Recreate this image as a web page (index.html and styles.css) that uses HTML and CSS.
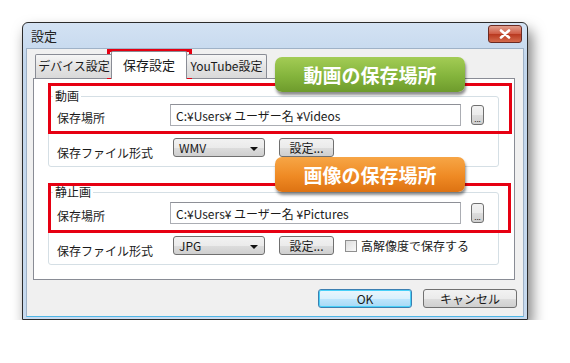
FILE: index.html
```html
<!DOCTYPE html>
<html lang="ja">
<head>
  <meta charset="UTF-8" />
  <title>設定</title>
  <link rel="stylesheet" href="styles.css">
</head>
<body>
  <div class="window">
    <div class="titlebar">
      <span class="title">設定</span>
      <button class="close-btn">
        <svg width="14" height="10" viewBox="0 0 14 10"><path d="M3 1.5 L11 8.5 M11 1.5 L3 8.5" stroke="#fff" stroke-width="2.6" stroke-linecap="round"/></svg>
      </button>
    </div>
    <div class="client">
      <div class="tabs">
        <div class="tab tab-device">デバイス設定</div>
        <div class="tab tab-save active">保存設定</div>
        <div class="tab tab-youtube">YouTube設定</div>
      </div>
      <div class="tab-panel">
        <fieldset class="group group-video">
          <legend>動画</legend>
          <div class="row row-path">
            <span class="label">保存場所</span>
            <input type="text" class="path" value="C:¥Users¥ ユーザー名 ¥Videos" />
            <button class="browse">...</button>
          </div>
          <div class="row row-format">
            <span class="label">保存ファイル形式</span>
            <div class="select"><span>WMV</span><i class="arrow"></i></div>
            <button class="btn-small">設定...</button>
          </div>
        </fieldset>
        <fieldset class="group group-image">
          <legend>静止画</legend>
          <div class="row row-path">
            <span class="label">保存場所</span>
            <input type="text" class="path" value="C:¥Users¥ ユーザー名 ¥Pictures" />
            <button class="browse">...</button>
          </div>
          <div class="row row-format">
            <span class="label">保存ファイル形式</span>
            <div class="select"><span>JPG</span><i class="arrow"></i></div>
            <button class="btn-small">設定...</button>
            <label class="check"><span class="box"></span>高解像度で保存する</label>
          </div>
        </fieldset>
      </div>
      <div class="dialog-buttons">
        <button class="btn btn-ok">OK</button>
        <button class="btn">キャンセル</button>
      </div>
    </div>
  </div>

  <div class="mark mark-tab"></div>
  <div class="mark mark-video"></div>
  <div class="mark mark-image"></div>
  <div class="callout callout-green">動画の保存場所</div>
  <div class="callout callout-orange">画像の保存場所</div>
</body>
</html>
```

FILE: styles.css
```css
body {
  margin: 0;
  background: #fff;
  font-family: "Noto Sans CJK JP", "Noto Sans", sans-serif;
  font-size: 12px;
  color: #1a1a1a;
}
button, input {
  font-family: inherit;
  font-size: 12px;
  color: #1a1a1a;
}

/* window frame */
.window {
  margin: 22px 0 0 22px;
  width: 498px;
  border: 1px solid #2b2b2b;
  border-radius: 6px 6px 0 0;
  padding: 0 3px 2px;
  background: linear-gradient(#d3e2f3, #c2d6ec 40px, #c7daef);
  box-shadow: 4px 8px 14px rgba(0, 0, 0, 0.5);
}
.titlebar {
  height: 25px;
  display: flex;
  align-items: center;
  justify-content: space-between;
}
.title {
  margin-left: 5px;
  font-size: 13px;
  color: #222;
}
.close-btn {
  width: 34px;
  height: 18px;
  margin-top: -3px;
  margin-right: 2px;
  padding: 0;
  border: 1px solid #6b2a22;
  border-radius: 3px;
  background: linear-gradient(#e2a08f, #cf5a43 50%, #b8381f 51%, #d46a4c);
  display: flex;
  align-items: center;
  justify-content: center;
}

.client {
  background: #f0f0f0;
  border: 1px solid #9fb2c7;
  border-bottom-color: #4fb6e6;
  padding: 0 8px 8px 6px;
}

/* tabs */
.tabs {
  display: flex;
  align-items: flex-end;
  height: 29px;
  padding-left: 2px;
  position: relative;
  z-index: 1;
}
.tab {
  box-sizing: border-box;
  height: 24px;
  border: 1px solid #898c95;
  border-bottom: none;
  border-radius: 2px 2px 0 0;
  background: linear-gradient(#f6f6f6, #e4e4e4 50%, #d9d9d9);
  text-align: center;
  line-height: 22px;
  font-size: 12px;
}
.tab-device { width: 78px; }
.tab-save { width: 76px; margin-left: -2px; }
.tab-youtube { width: 80px; }
.tab.active {
  height: 28px;
  margin-bottom: -1px;
  background: #fff;
  line-height: 26px;
  font-size: 13px;
  position: relative;
}
.tab.active + .tab { border-left: none; }

.tab-panel {
  background: #fff;
  border: 1px solid #898c95;
  padding: 9px 15px 14px 14px;
}

/* group boxes */
.group {
  margin: 0;
  border: 1px solid #d5dfe5;
  border-radius: 3px;
  padding: 0 8px 9px 8px;
}
.group legend {
  padding: 0 2px;
  margin-left: -4px;
  line-height: 16px;
  font-size: 12px;
}
.group-image {
  margin-top: 17px;
  padding-top: 2px;
}
.row {
  display: flex;
  align-items: flex-start;
}
.row-path { height: 22px; }
.row-format { height: 19px; margin-top: 12px; }
.label {
  width: 113px;
  flex: none;
  line-height: 16px;
  padding-top: 6px;
}
.row-format .label { padding-top: 7px; }

.path {
  box-sizing: border-box;
  width: 291px;
  height: 22px;
  margin: 0;
  border: 1px solid #abadb3;
  border-top-color: #8e9097;
  padding: 0 5px;
  background: #fff;
}
.browse {
  box-sizing: border-box;
  width: 13px;
  height: 20px;
  margin: 1px 0 0 10px;
  padding: 0;
  border: 1px solid #707070;
  border-radius: 3px;
  background: linear-gradient(#f2f2f2, #ebebeb 50%, #dddddd 51%, #cfcfcf);
  font-size: 8px;
  line-height: 26px;
  overflow: hidden;
}

.select {
  box-sizing: border-box;
  width: 92px;
  height: 19px;
  margin-left: 3px;
  border: 1px solid #707070;
  border-radius: 3px;
  background: linear-gradient(#f2f2f2, #ebebeb 50%, #dddddd 51%, #cfcfcf);
  display: flex;
  align-items: center;
  justify-content: space-between;
  padding: 0 6px 0 5px;
  line-height: 16px;
}
.arrow {
  width: 0;
  height: 0;
  border-left: 4px solid transparent;
  border-right: 4px solid transparent;
  border-top: 4px solid #111;
  margin-top: 2px;
}
.btn-small {
  box-sizing: border-box;
  width: 55px;
  height: 19px;
  margin-left: 14px;
  padding: 0;
  border: 1px solid #707070;
  border-radius: 3px;
  background: linear-gradient(#f2f2f2, #ebebeb 50%, #dddddd 51%, #cfcfcf);
  line-height: 16px;
}
.check {
  display: flex;
  align-items: center;
  margin-left: 11px;
  height: 19px;
  line-height: 16px;
}
.box {
  box-sizing: border-box;
  width: 12px;
  height: 12px;
  margin-right: 4px;
  border: 1px solid #8f8f8f;
  background: linear-gradient(135deg, #dcdcdc, #f8f8f8);
}

/* dialog buttons */
.dialog-buttons {
  display: flex;
  justify-content: flex-end;
  gap: 11px;
  margin: 9px -2px 0 0;
}
.btn {
  box-sizing: border-box;
  width: 94px;
  height: 19px;
  padding: 0;
  border: 1px solid #707070;
  border-radius: 3px;
  background: linear-gradient(#f2f2f2, #ebebeb 50%, #dddddd 51%, #cfcfcf);
  line-height: 16px;
}
.btn-ok {
  border-color: #3c7fb1;
  box-shadow: inset 0 0 0 1px #48d0f8;
  background: linear-gradient(#eaf6fd, #d9f0fc 50%, #bee6fd 51%, #a7d9f5);
}

/* annotations lying over the dialog */
.mark {
  position: absolute;
  box-sizing: border-box;
  border: 3px solid #e60012;
}
.mark-tab { left: 107px; top: 49px; width: 85px; height: 30px; }
.mark-video { left: 48px; top: 83px; width: 464px; height: 51px; }
.mark-image { left: 48px; top: 183px; width: 463px; height: 50px; }

.callout {
  position: absolute;
  left: 275px;
  width: 190px;
  height: 35px;
  border-radius: 7px;
  color: #fff;
  font-weight: bold;
  font-size: 19px;
  line-height: 35px;
  text-align: center;
  box-shadow: 1px 3px 3px rgba(0, 0, 0, 0.45);
}
.callout-green {
  top: 57px;
  background: linear-gradient(#a3cc55, #84b43c 55%, #6e9b2c);
}
.callout-orange {
  top: 157px;
  background: linear-gradient(#f7a646, #ef8a24 55%, #dd7212);
}
```
